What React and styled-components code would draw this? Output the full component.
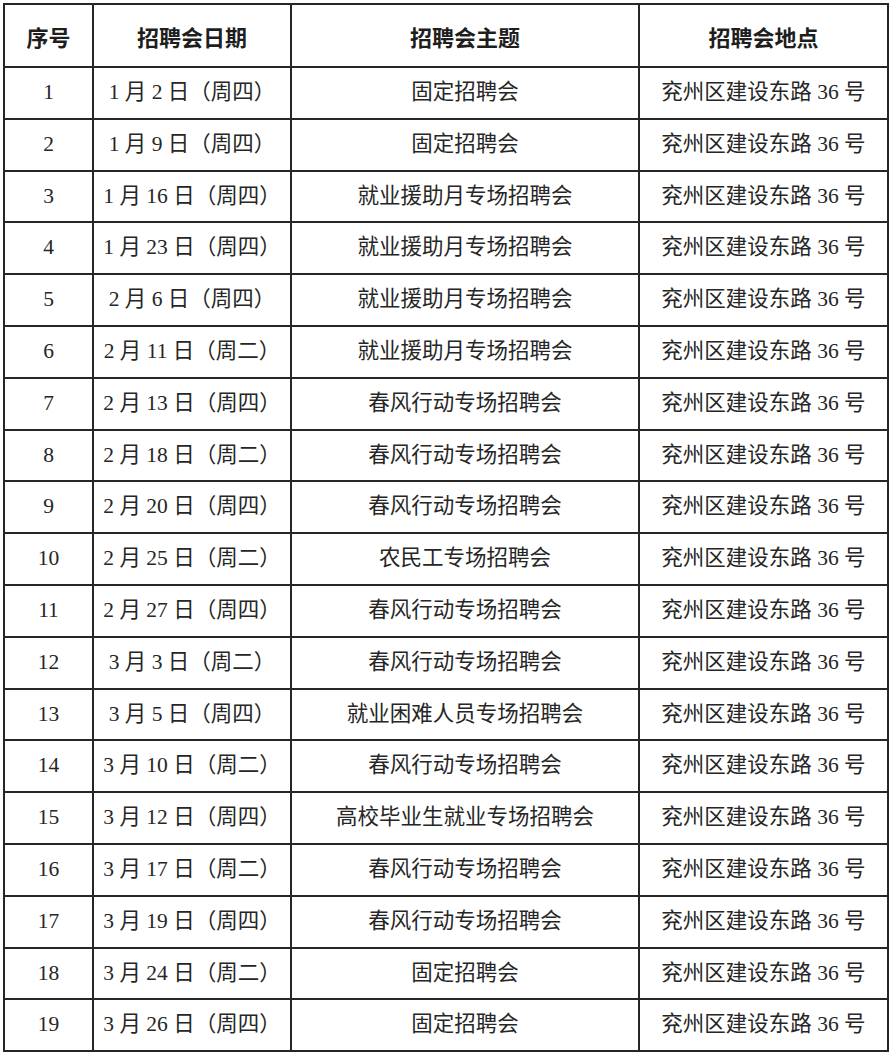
import React from 'react';
import styled, { createGlobalStyle } from 'styled-components';

const GlobalStyle = createGlobalStyle`
    html, body {
        margin: 0;
        padding: 0;
        background: #ffffff;
    }
`

const Page = styled.div`
    padding: 3px 0 0 3px;
    width: 892px;
    box-sizing: border-box;
`

const Table = styled.table`
    border-collapse: collapse;
    table-layout: fixed;
    width: 884px;
    color: #1e1e1e;
`

const HeadCell = styled.th`
    height: 61px;
    padding: 0;
    border: 2px solid #262626;
    font-family: "Noto Sans CJK SC", sans-serif;
    font-weight: 700;
    font-size: 22px;
    text-align: center;
    vertical-align: middle;
`

const Cell = styled.td`
    height: 49.8px;
    padding: 0;
    border: 2px solid #262626;
    font-family: "Liberation Serif", "Noto Sans CJK SC", serif;
    font-weight: 400;
    font-size: 21.5px;
    line-height: 1.2;
    text-align: center;
    vertical-align: middle;
    white-space: nowrap;
    color: #262626;
`

const columns = [
    { title: '序号', width: 89 },
    { title: '招聘会日期', width: 198 },
    { title: '招聘会主题', width: 348 },
    { title: '招聘会地点', width: 249 },
];

const FIXED = '固定招聘会';
const AID = '就业援助月专场招聘会';
const SPRING = '春风行动专场招聘会';
const PLACE = '兖州区建设东路 36 号';

const rows = [
    ['1 月 2 日（周四）', FIXED],
    ['1 月 9 日（周四）', FIXED],
    ['1 月 16 日（周四）', AID],
    ['1 月 23 日（周四）', AID],
    ['2 月 6 日（周四）', AID],
    ['2 月 11 日（周二）', AID],
    ['2 月 13 日（周四）', SPRING],
    ['2 月 18 日（周二）', SPRING],
    ['2 月 20 日（周四）', SPRING],
    ['2 月 25 日（周二）', '农民工专场招聘会'],
    ['2 月 27 日（周四）', SPRING],
    ['3 月 3 日（周二）', SPRING],
    ['3 月 5 日（周四）', '就业困难人员专场招聘会'],
    ['3 月 10 日（周二）', SPRING],
    ['3 月 12 日（周四）', '高校毕业生就业专场招聘会'],
    ['3 月 17 日（周二）', SPRING],
    ['3 月 19 日（周四）', SPRING],
    ['3 月 24 日（周二）', FIXED],
    ['3 月 26 日（周四）', FIXED],
];

export default function App() {
    return (
        <Page>
            <GlobalStyle />
            <Table>
                <colgroup>
                    {columns.map((col) => (
                        <col key={col.title} style={{ width: col.width }} />
                    ))}
                </colgroup>
                <thead>
                    <tr>
                        {columns.map((col) => (
                            <HeadCell key={col.title}>{col.title}</HeadCell>
                        ))}
                    </tr>
                </thead>
                <tbody>
                    {rows.map((row, index) => (
                        <tr key={index + 1}>
                            <Cell>{index + 1}</Cell>
                            <Cell>{row[0]}</Cell>
                            <Cell>{row[1]}</Cell>
                            <Cell>{PLACE}</Cell>
                        </tr>
                    ))}
                </tbody>
            </Table>
        </Page>
    );
}
